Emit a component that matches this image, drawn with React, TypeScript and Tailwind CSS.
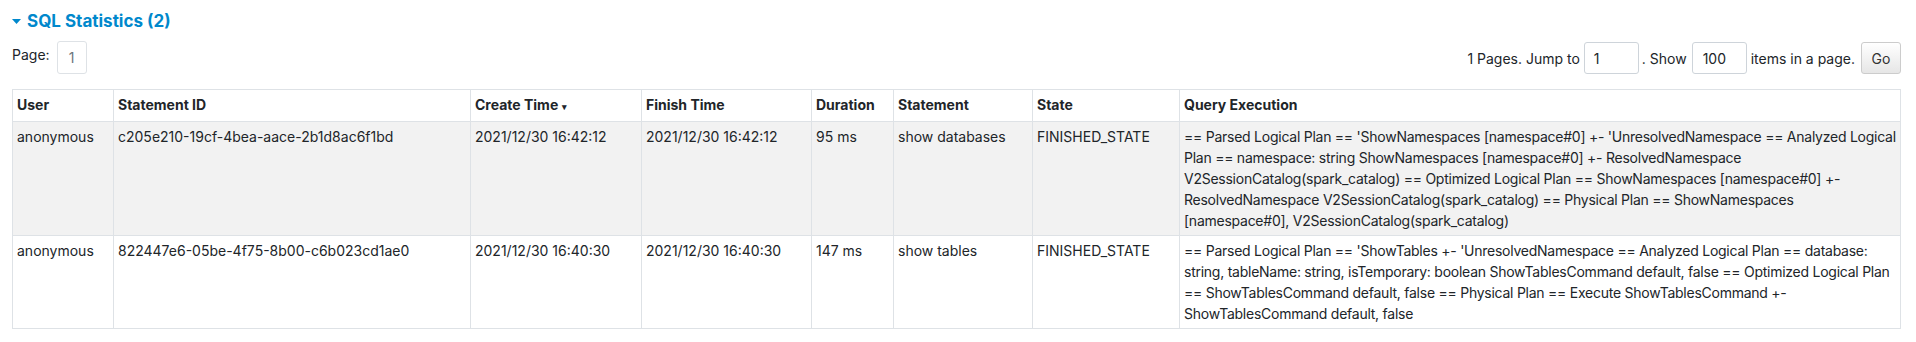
const rows = [
  {
    user: "anonymous",
    id: "c205e210-19cf-4bea-aace-2b1d8ac6f1bd",
    create: "2021/12/30 16:42:12",
    finish: "2021/12/30 16:42:12",
    duration: "95 ms",
    statement: "show databases",
    state: "FINISHED_STATE",
    plan: [
      "== Parsed Logical Plan == 'ShowNamespaces [namespace#0] +- 'UnresolvedNamespace == Analyzed Logical",
      "Plan == namespace: string ShowNamespaces [namespace#0] +- ResolvedNamespace",
      "V2SessionCatalog(spark_catalog) == Optimized Logical Plan == ShowNamespaces [namespace#0] +-",
      "ResolvedNamespace V2SessionCatalog(spark_catalog) == Physical Plan == ShowNamespaces",
      "[namespace#0], V2SessionCatalog(spark_catalog)",
    ],
  },
  {
    user: "anonymous",
    id: "822447e6-05be-4f75-8b00-c6b023cd1ae0",
    create: "2021/12/30 16:40:30",
    finish: "2021/12/30 16:40:30",
    duration: "147 ms",
    statement: "show tables",
    state: "FINISHED_STATE",
    plan: [
      "== Parsed Logical Plan == 'ShowTables +- 'UnresolvedNamespace == Analyzed Logical Plan == database:",
      "string, tableName: string, isTemporary: boolean ShowTablesCommand default, false == Optimized Logical Plan",
      "== ShowTablesCommand default, false == Physical Plan == Execute ShowTablesCommand +-",
      "ShowTablesCommand default, false",
    ],
  },
];

const td = "border border-[#dee2e6] px-[4px] py-[4px] align-top";

export default function App() {
  return (
    <div className="w-[1916px] h-[342px] bg-white pl-[12px] pr-[15px] pt-[10px] text-[14px] leading-[21px] text-[#212529] font-['Inter','Liberation_Sans',sans-serif]">
      <h4 className="flex items-center gap-[6px] text-[17px] leading-[22px] font-bold text-[#0088cc]">
        <svg width="9" height="5" viewBox="0 0 9 5" className="mt-[1px]">
          <path d="M0 0 H9 L4.5 5 Z" fill="#0088cc" />
        </svg>
        SQL Statistics (2)
      </h4>

      <div className="mt-[9px] flex justify-between items-start">
        <div className="flex items-start gap-[7px]">
          <span className="mt-[3px]">Page:</span>
          <span className="w-[30px] h-[33px] flex items-center justify-center border border-[#dee2e6] rounded-[3px] text-[#6c757d]">
            1
          </span>
        </div>
        <div className="flex items-center h-[32px] mt-[1px]">
          <span>1 Pages. Jump to</span>
          <span className="ml-[4px] w-[55px] h-[32px] border border-[#ced4da] rounded-[3px] pl-[9px] flex items-center">
            1
          </span>
          <span className="ml-[3px]">. Show</span>
          <span className="ml-[5px] w-[55px] h-[32px] border border-[#ced4da] rounded-[3px] pl-[10px] flex items-center">
            100
          </span>
          <span className="ml-[4px]">items in a page.</span>
          <button className="ml-[6px] w-[40px] h-[32px] border border-[#cccccc] rounded-[3px] bg-gradient-to-b from-white to-[#e6e6e6] text-[#333]">
            Go
          </button>
        </div>
      </div>

      <table className="mt-[15px] w-[1889px] border-collapse table-fixed">
        <colgroup>
          <col className="w-[101px]" />
          <col className="w-[357px]" />
          <col className="w-[171px]" />
          <col className="w-[170px]" />
          <col className="w-[82px]" />
          <col className="w-[139px]" />
          <col className="w-[147px]" />
          <col />
        </colgroup>
        <thead>
          <tr className="text-left font-bold">
            <th className={td}>User</th>
            <th className={td}>Statement ID</th>
            <th className={td}>
              Create Time <span className="text-[9px] align-middle">▾</span>
            </th>
            <th className={td}>Finish Time</th>
            <th className={td}>Duration</th>
            <th className={td}>Statement</th>
            <th className={td}>State</th>
            <th className={td}>Query Execution</th>
          </tr>
        </thead>
        <tbody>
          {rows.map((r, i) => (
            <tr key={r.id} className={i % 2 === 0 ? "bg-[#f2f2f2]" : "bg-white"}>
              <td className={td}>{r.user}</td>
              <td className={td}>{r.id}</td>
              <td className={td}>{r.create}</td>
              <td className={td}>{r.finish}</td>
              <td className={td}>{r.duration}</td>
              <td className={td}>{r.statement}</td>
              <td className={td}>{r.state}</td>
              <td className={td + " tracking-[-0.25px]"}>
                {r.plan.map((line) => (
                  <div key={line} className="whitespace-nowrap">
                    {line}
                  </div>
                ))}
              </td>
            </tr>
          ))}
        </tbody>
      </table>
    </div>
  );
}
